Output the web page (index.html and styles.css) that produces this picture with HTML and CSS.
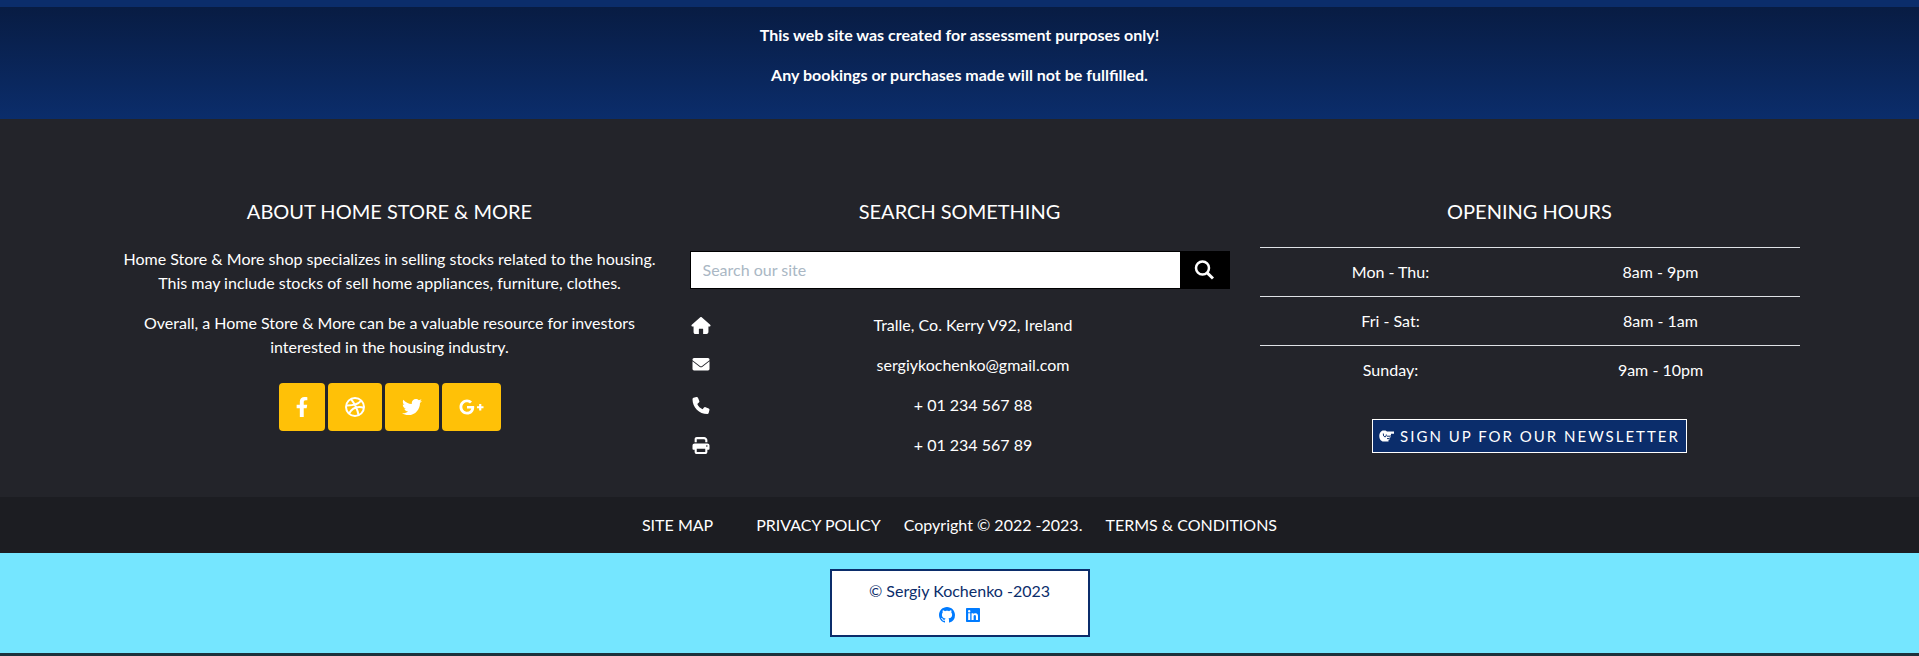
FILE: index.html
```html
<!DOCTYPE html>
<html lang="en">
<head>
<meta charset="utf-8">
<meta name="viewport" content="width=device-width, initial-scale=1">
<title>Home Store &amp; More</title>
<link rel="stylesheet" href="styles.css">
</head>
<body>
<section class="notice">
  <p>This web site was created for assessment purposes only!</p>
  <p>Any bookings or purchases made will not be fullfilled.</p>
</section>
<footer>
  <div class="columns">
    <section class="column">
      <h2>ABOUT HOME STORE &amp; MORE</h2>
      <p>Home Store &amp; More shop specializes in selling stocks related to the housing. This may include stocks of sell home appliances, furniture, clothes.</p>
      <p>Overall, a Home Store &amp; More can be a valuable resource for investors interested in the housing industry.</p>
      <div class="social">
        <a href="#" aria-label="Facebook"><svg width="14" height="20" viewBox="0 0 320 512"><path d="M279.14 288l14.22-92.66h-88.91v-60.13c0-25.35 12.42-50.06 52.24-50.06h40.42V6.26S260.43 0 225.36 0c-73.22 0-121.08 44.38-121.08 124.72v70.62H22.89V288h81.39v224h100.17V288z"/></svg></a>
        <a href="#" aria-label="Dribbble"><svg width="22" height="20" viewBox="0 0 22 20"><g fill="none" stroke="#fff" stroke-width="2"><circle cx="11" cy="10" r="9"/><path d="M7 2.200C11 7 13.500 12.500 14.500 18.200M2.200 8.500C8.500 8.700 14 7.500 17.200 3.700M5 16.600C8 11 13.500 9 20 10.700"/></g></svg></a>
        <a href="#" aria-label="Twitter"><svg width="22" height="20" viewBox="0 0 512 512"><path d="M459.37 151.716c.325 4.548.325 9.097.325 13.645 0 138.72-105.583 298.558-298.558 298.558-59.452 0-114.68-17.219-161.137-47.106 8.447.974 16.568 1.299 25.34 1.299 49.055 0 94.213-16.568 130.274-44.832-46.132-.975-84.792-31.188-98.112-72.772 6.498.974 12.995 1.624 19.818 1.624 9.421 0 18.843-1.3 27.614-3.573-48.081-9.747-84.143-51.98-84.143-102.985v-1.299c13.969 7.797 30.214 12.67 47.431 13.319-28.264-18.843-46.781-51.005-46.781-87.391 0-19.492 5.197-37.36 14.294-52.954 51.655 63.675 129.3 105.258 216.365 109.807-1.624-7.797-2.599-15.918-2.599-24.04 0-57.828 46.782-104.934 104.934-104.934 30.213 0 57.502 12.67 76.67 33.137 23.715-4.548 46.456-13.32 66.599-25.34-7.798 24.366-24.366 44.833-46.132 57.827 21.117-2.273 41.584-8.122 60.426-16.243-14.292 20.791-32.161 39.308-52.628 54.253z"/></svg></a>
        <a href="#" aria-label="Google Plus"><svg width="27" height="20" viewBox="0 0 640 512"><path d="M386.061 228.496c1.834 9.692 3.143 19.384 3.143 31.956C389.204 370.205 315.599 448 204.800 448c-106.084 0-192-85.915-192-192s85.916-192 192-192c51.864 0 95.083 18.859 128.611 50.292l-52.126 50.030c-14.145-13.621-39.028-29.599-76.485-29.599-65.484 0-118.920 54.221-118.920 121.277 0 67.056 53.436 121.277 118.920 121.277 75.961 0 104.513-54.745 108.965-82.773H204.800v-66.009h181.261zm185.406 6.437V179.200h-56.001v55.733h-55.733v56.001h55.733v55.733h56.001v-55.733H627.200v-56.001h-55.733z"/></svg></a>
      </div>
    </section>
    <section class="column">
      <h2>SEARCH SOMETHING</h2>
      <form class="search">
        <input type="search" aria-label="Search our site" placeholder="Search our site">
        <button type="button" aria-label="Search"><svg width="20" height="20" viewBox="0 0 20 20"><g fill="none" stroke="#fff" stroke-width="2.500"><circle cx="8.500" cy="8" r="6.500"/><path d="M13 12.700 19 18.500" stroke-width="3"/></g></svg></button>
      </form>
      <ul class="contacts">
        <li><svg width="20" height="17" viewBox="0 0 576 512"><path d="M575.800 255.500c0 18-15 32.100-32 32.100h-32l.7 160.200c0 35-22 64.200-56 64.200H352V376c0-22-10-24-24-24h-80c-14 0-24 2-24 24v136H120c-36 0-56-28-56-64V287.600H32c-18 0-32-14-32-32.100 0-9 3-17 10-24L266.400 8c7-7 15-8 22-8s15 2 21 7l255.400 224.500c8 7 12 15 11 24z"/></svg><span>Tralle, Co. Kerry V92, Ireland</span></li>
        <li><svg width="20" height="16" viewBox="0 0 20 16"><path d="M3 1h14q1.500 0 1.500 1.500v.8L11 9q-1 .8-2 0L1.500 3.300v-.8Q1.500 1 3 1zM1.500 4.300 8.500 9.700q1.500 1 3 0l7-5.400v7.700q0 1.400-1.500 1.400H3q-1.500 0-1.500-1.400z"/></svg><span>sergiykochenko@gmail.com</span></li>
        <li><svg width="20" height="17" viewBox="0 0 512 512"><path d="M164.900 24.600c-7.700-18.600-28-28.500-47.400-23.200l-88 24C12.100 30.200 0 46 0 64c0 247.400 200.600 448 448 448 18 0 33.800-12.100 38.600-29.500l24-88c5.300-19.400-4.600-39.700-23.200-47.400l-96-40c-16.300-6.800-35.200-2.100-46.300 11.600L304.700 368C234.300 334.700 177.300 277.700 144 207.300l49.300-40.300c13.700-11.200 18.400-30 11.600-46.300z"/></svg><span>+ 01 234 567 88</span></li>
        <li><svg width="20" height="17" viewBox="0 0 512 512"><path d="M128 0C92.700 0 64 28.700 64 64v96h64V64h226.700L384 93.300V160h64V93.300c0-17-6.700-33.300-18.700-45.300L400 18.700C388 6.700 371.700 0 354.700 0zm256 352v96H128v-96zm64 32h32c17.700 0 32-14.300 32-32v-96c0-35.300-28.700-64-64-64H64c-35.300 0-64 28.700-64 64v96c0 17.700 14.300 32 32 32h32v64c0 35.300 28.700 64 64 64h256c35.300 0 64-28.700 64-64zm-16-136a24 24 0 1 1 0 48 24 24 0 0 1 0-48z" fill-rule="evenodd"/></svg><span>+ 01 234 567 89</span></li>
      </ul>
    </section>
    <section class="column">
      <h2>OPENING HOURS</h2>
      <table class="hours">
        <tr><td>Mon - Thu:</td><td>8am - 9pm</td></tr>
        <tr><td>Fri - Sat:</td><td>8am - 1am</td></tr>
        <tr><td>Sunday:</td><td>9am - 10pm</td></tr>
      </table>
      <a class="newsletter" href="#"><svg width="15" height="12" viewBox="0 0 15 12"><path d="M4.500.5C2 .5.300 3 .300 6s1.700 5.500 4.200 5.500H9.500V9.800H10.500V7.500H11.500V5H12V3.800H15V1.500H8L6.500.5z"/><path d="M4.300 3.500Q4 6.500 6 7 7.500 6.800 7.300 4.500M8 6.200h3M8 8.600h2.300" fill="none" stroke="#0b2d6b"/></svg> SIGN UP FOR OUR NEWSLETTER</a>
    </section>
  </div>
  <nav class="legal">
    <a class="sitemap" href="#">SITE MAP</a>
    <a href="#">PRIVACY POLICY</a>
    <span>Copyright © 2022 -2023.</span>
    <a href="#">TERMS &amp; CONDITIONS</a>
  </nav>
  <div class="credit">
    <div class="card">
      <span>© Sergiy Kochenko -2023</span>
      <div class="profiles">
        <a href="#" aria-label="GitHub"><svg width="16" height="16" viewBox="0 0 16 16"><path d="M8 0C3.580 0 0 3.580 0 8c0 3.540 2.290 6.530 5.470 7.590.4.070.55-.17.55-.38 0-.19-.01-.82-.01-1.490-2.010.37-2.530-.49-2.690-.94-.09-.23-.48-.94-.82-1.130-.28-.15-.68-.52-.01-.53.63-.01 1.080.58 1.230.82.72 1.210 1.870.87 2.330.66.07-.52.28-.87.51-1.070-1.780-.2-3.640-.89-3.640-3.950 0-.87.31-1.590.82-2.150-.08-.2-.36-1.020.08-2.120 0 0 .67-.21 2.200.82.64-.18 1.320-.27 2-.27s1.360.09 2 .27c1.530-1.040 2.200-.82 2.200-.82.44 1.100.16 1.920.08 2.120.51.56.82 1.270.82 2.150 0 3.070-1.870 3.750-3.650 3.950.29.25.54.73.54 1.480 0 1.070-.01 1.930-.01 2.200 0 .21.15.46.55.38A8 8 0 0 0 16 8c0-4.420-3.580-8-8-8z"/></svg></a>
        <a href="#" aria-label="LinkedIn"><svg width="14" height="14" viewBox="0 0 448 448"><path fill-rule="evenodd" d="M416 0H31.900C14.300 0 0 14.500 0 32.300v383.400C0 433.500 14.300 448 31.900 448H416c17.600 0 32-14.500 32-32.300V32.300C448 14.500 433.600 0 416 0zM135.400 384H69V170.200h66.500V384zM102.200 64a38.500 38.500 0 1 1 0 77 38.500 38.500 0 0 1 0-77zM384.300 384h-66.400V280c0-24.800-.5-56.700-34.500-56.700-34.600 0-39.900 27-39.900 54.900V384h-66.400V170.200h63.700v29.200h.9c8.900-16.800 30.600-34.500 62.900-34.500 67.200 0 79.700 44.300 79.700 101.900z"/></svg></a>
      </div>
    </div>
  </div>
</footer>
</body>
</html>
```
FILE: styles.css
```css
* { box-sizing: border-box; }
body {
  margin: 0;
  background: #1d323c;
  color: #fff;
  font: 16px/24px Lato, sans-serif;
  text-align: center;
}
a { color: inherit; text-decoration: none; }
svg { display: block; fill: currentColor; }
p { margin: 0 0 16px; }
.notice {
  padding: 16px;
  border-top: 7px solid #0b2d6b;
  background: linear-gradient(#081c43, #0b2d6b);
  font-weight: 700;
}
.columns {
  display: grid;
  grid-template-columns: repeat(3, minmax(0, 1fr));
  gap: 30px;
  max-width: 1710px;
  margin: 0 auto;
  padding: 80px 15px 40px;
}
footer { background: #23242a; }
h2 { margin: 0 0 24px; font-size: 20px; line-height: 24px; font-weight: 400; }
.social { display: flex; justify-content: center; gap: 3px; margin-top: 24px; }
.social a {
  display: flex;
  align-items: center;
  height: 48px;
  padding: 0 16px;
  border-radius: 4px;
  background: #ffc107;
}
.search { display: flex; margin: 28px 0 24px; border: 1px solid #000; background: #000; }
.search input {
  flex: 1;
  min-width: 0;
  height: 36px;
  padding: 0 12px 2px;
  border: 0;
  border-radius: 0;
  background: #fff;
  font: inherit;
}
.search input::placeholder { color: #aab7c4; }
.search button { display: grid; place-items: center; width: 49px; padding: 0; border: 0; background: #000; }
.contacts { display: grid; gap: 16px; margin: 0; padding: 0; list-style: none; }
.contacts li { display: flex; align-items: center; gap: 6px; padding-left: 1px; }
.contacts span { flex: 1; }
.hours { width: 100%; table-layout: fixed; border-collapse: collapse; margin-bottom: 25px; }
.hours td { padding: 12px 20px 12px 12px; border-top: 1px solid #dee2e6; }
.newsletter {
  display: inline-flex;
  align-items: center;
  gap: 6px;
  padding: 4px 6px;
  border: 1px solid #fff;
  background: #0b2d6b;
  font-size: 15px;
  letter-spacing: 2px;
}
.legal {
  display: flex;
  justify-content: center;
  gap: 23px;
  padding: 16px;
  background: #1c1d22;
}
.sitemap { margin-right: 20px; }
.credit { display: flex; justify-content: center; padding: 16px; background: #75e6ff; }
.card { width: 260px; padding: 8px; border: 2px solid #0b2d6b; background: #fff; color: #0b2d6b; }
.profiles { display: flex; justify-content: center; align-items: center; gap: 11px; height: 24px; color: #007bff; }
```
